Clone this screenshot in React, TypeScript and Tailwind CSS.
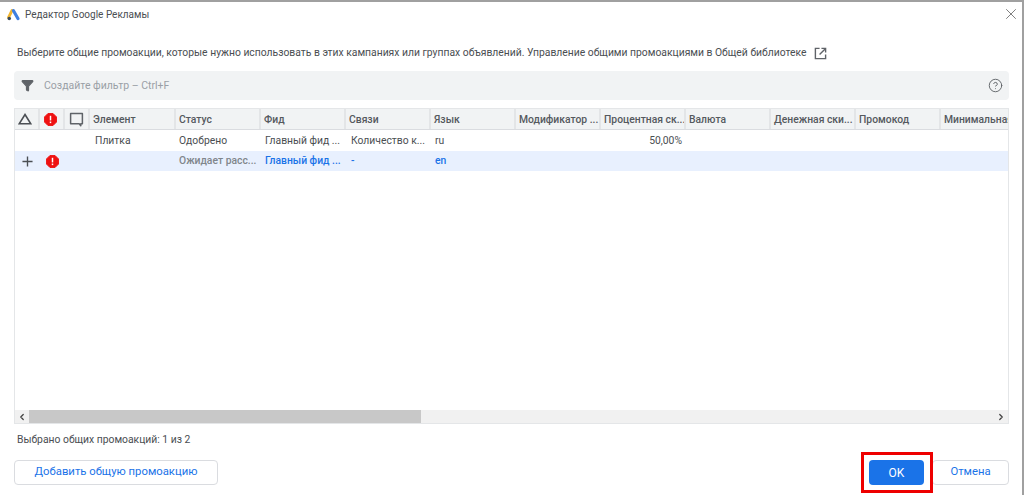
import { Filter, CircleHelp, X, ChevronLeft, ChevronRight } from "lucide-react";

const gridCols = "grid grid-cols-[25px_25px_25px_86px_85px_85px_85px_85px_85px_85px_85px_85px_85px_68px]";

const headers = ["Элемент", "Статус", "Фид", "Связи", "Язык", "Модификатор ...", "Процентная ск...", "Валюта", "Денежная ски...", "Промокод", "Минимальная"];

function AlertDot() {
  return (
    <svg viewBox="0 0 14 14" className="w-[13px] h-[13px]">
      <path d="M4.3 0.5h5.4l3.8 3.8v5.4l-3.8 3.8H4.3L0.5 9.700V4.300z" fill="#ee1111" stroke="#ee1111" strokeLinejoin="round" />
      <rect x="6.200" y="3" width="1.600" height="5" fill="#fff" />
      <rect x="6.200" y="9.200" width="1.600" height="1.700" fill="#fff" />
    </svg>
  );
}

function AdsLogo() {
  return (
    <svg viewBox="0 0 14 13" className="w-[13px] h-[12px]">
      <path d="M5.300 1.700 L1.700 9" stroke="#f2b632" strokeWidth="3.200" strokeLinecap="round" />
      <path d="M7 1.800 L11.800 10.400" stroke="#3f7fe0" strokeWidth="3.400" strokeLinecap="round" />
      <circle cx="2.400" cy="10.400" r="1.900" fill="#3a4a5a" />
    </svg>
  );
}

export default function App() {
  return (
    <div className="w-[1024px] h-[495px] bg-white overflow-hidden flex flex-col text-[10.35px] text-[#4a4e52] border-t-2 border-r-2 border-[#a0a0a0] font-['Roboto',sans-serif]">
      {/* title bar */}
      <div className="h-[25px] shrink-0 flex items-center pl-[7px] pr-[2px]">
        <AdsLogo />
        <span className="ml-[5px] -mt-[1px] text-[10px] text-[#4a4e52]">Редактор Google Рекламы</span>
        <X className="ml-auto -mt-[2px] w-[18px] h-[18px] text-[#555]" strokeWidth={1} />
      </div>

      {/* description */}
      <div className="mt-[18px] h-[16px] flex items-center pl-[17px]">
        <span>Выберите общие промоакции, которые нужно использовать в этих кампаниях или группах объявлений. Управление общими промоакциями в Общей библиотеке</span>
        <svg viewBox="0 0 14 14" className="ml-[7px] w-[13px] h-[13px]">
          <path d="M6 1.500 H1.500 V12.500 H12.500 V8" fill="none" stroke="#5f6368" strokeWidth="1.500" />
          <path d="M8 1.500 H12.500 V6 M12.500 1.500 L6 8" fill="none" stroke="#5f6368" strokeWidth="1.500" />
        </svg>
      </div>

      {/* filter */}
      <div className="mt-[10px] ml-[14px] w-[995px] h-[29px] shrink-0 bg-[#f1f3f4] rounded flex items-center pl-[7px] pr-[6px]">
        <Filter className="w-[13px] h-[13px] text-[#5f6368] fill-[#5f6368]" />
        <span className="ml-[10px] text-[10.5px] text-[#9aa0a6]">Создайте фильтр – Ctrl+F</span>
        <CircleHelp className="ml-auto w-[15px] h-[15px] text-[#5f6368]" strokeWidth={1.500} />
      </div>

      {/* table */}
      <div className="mt-[8px] ml-[14px] w-[995px] h-[316px] shrink-0 border border-[#e4e6e8] flex flex-col overflow-hidden">
        <div className={`${gridCols} h-[21px] shrink-0 bg-[#f1f3f4] border-b border-[#dadce0] font-medium text-[#55595e]`}>
          <div className="flex items-center justify-center border-r-2 border-[#e3e5e7] pr-[3px]">
            <svg viewBox="0 0 14 12" className="w-[14px] h-[12px]">
              <path d="M7 1.500 L12.800 10.800 H1.200 Z" fill="none" stroke="#4b4f54" strokeWidth="1.600" />
            </svg>
          </div>
          <div className="flex items-center justify-center border-r-2 border-[#e3e5e7] pr-[3px]">
            <AlertDot />
          </div>
          <div className="flex items-center justify-center border-r-2 border-[#e3e5e7]">
            <svg viewBox="0 0 14 14" className="w-[15px] h-[15px]">
              <path d="M1.500 1.500 H12.500 V11 H11 V12.800 L9.500 11 H1.500 Z" fill="none" stroke="#5f6368" strokeWidth="1.400" strokeLinejoin="round" />
            </svg>
          </div>
          {headers.map((h) => (
            <div key={h} className="flex items-center pl-[3px] pt-[1px] border-r-2 border-[#e3e5e7] whitespace-nowrap overflow-hidden last:border-r-0">
              {h}
            </div>
          ))}
        </div>

        <div className={`${gridCols} h-[21px] shrink-0 items-center`}>
          <div className="col-start-4 pl-[5px]">Плитка</div>
          <div className="pl-[3px]">Одобрено</div>
          <div className="pl-[4px] whitespace-nowrap">Главный фид ...</div>
          <div className="pl-[5px] whitespace-nowrap">Количество к...</div>
          <div className="pl-[4px]">ru</div>
          <div className="text-right pr-[4px] col-start-10">50,00%</div>
        </div>

        <div className={`${gridCols} h-[20px] shrink-0 items-center bg-[#e8f0fe] font-medium`}>
          <div className="flex justify-center">
            <svg viewBox="0 0 12 12" className="w-[11px] h-[11px]">
              <path d="M6 0.500 V11.500 M0.500 6 H11.500" stroke="#4b4f54" strokeWidth="1.500" />
            </svg>
          </div>
          <div className="flex justify-center">
            <AlertDot />
          </div>
          <div className="col-start-5 pl-[3px] text-[#80868b] whitespace-nowrap">Ожидает расс...</div>
          <div className="pl-[4px] text-[#1a73e8] whitespace-nowrap">Главный фид ...</div>
          <div className="pl-[5px] text-[#1a73e8]">-</div>
          <div className="pl-[4px] text-[#1a73e8]">en</div>
        </div>

        {/* horizontal scrollbar */}
        <div className="mt-auto h-[13px] shrink-0 bg-[#f1f1f1] flex items-center">
          <div className="w-[14px] flex justify-center">
            <ChevronLeft className="w-[10px] h-[10px] text-[#444]" strokeWidth={3} />
          </div>
          <div className="w-[392px] h-full bg-[#c8c8c8]" />
          <div className="ml-auto w-[15px] flex justify-center">
            <ChevronRight className="w-[10px] h-[10px] text-[#444]" strokeWidth={3} />
          </div>
        </div>
      </div>

      <div className="mt-[8px] h-[16px] flex items-center pl-[17px]">Выбрано общих промоакций: 1 из 2</div>

      {/* footer */}
      <div className="mt-[12px] ml-[14px] w-[995px] flex items-center">
        <button className="w-[204px] h-[25px] bg-white border border-[#dadce0] rounded text-[#1a73e8] text-[11.3px] font-normal">
          Добавить общую промоакцию
        </button>
        <button className="relative ml-auto w-[55px] h-[25px] bg-[#1a73e8] rounded text-white text-[12px] font-normal">
          OK
          <span className="absolute -left-[8px] -top-[8px] w-[72px] h-[41px] border-[3px] border-[#ee0000]" />
        </button>
        <button className="ml-[8px] w-[77px] h-[25px] bg-white border border-[#dadce0] rounded text-[#1a73e8] text-[11.300px] font-normal">
          Отмена
        </button>
      </div>
    </div>
  );
}
